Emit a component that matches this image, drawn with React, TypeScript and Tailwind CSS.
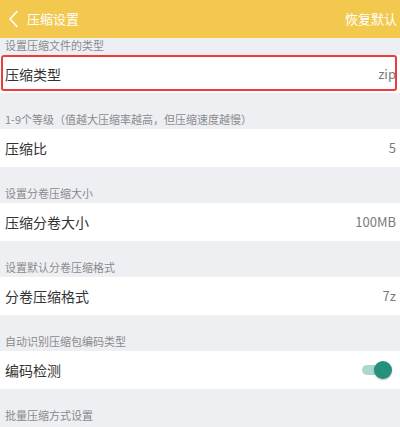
import React from "react";

const font = { fontFamily: '"Noto Sans CJK SC", "Noto Sans", sans-serif' };

function Label({ text, first }: { text: string; first?: boolean }) {
  return (
    <div
      className={
        "flex items-end pl-[5px] pb-[2px] text-[11px] leading-[15px] text-[#8a8a8e] " +
        (first ? "h-[17px]" : "h-[36px]")
      }
    >
      {text}
    </div>
  );
}

function Row({ title, value, boxed, children }: { title: string; value?: string; boxed?: boolean; children?: React.ReactNode }) {
  return (
    <div className="relative flex h-[38px] items-center justify-between bg-white pl-[5px] pr-[4px]">
      <span className="text-[14px] text-[#333333]">{title}</span>
      {value && <span className="text-[13px] text-[#7a7a7a]">{value}</span>}
      {children}
      {boxed && (
        <div className="pointer-events-none absolute left-[1px] right-[3px] top-0 bottom-[2px] rounded-[3px] border-[2px] border-[#ee3b3b]" />
      )}
    </div>
  );
}

export default function App() {
  return (
    <div className="h-[427px] w-[400px] overflow-hidden bg-[#eeeff3]" style={font}>
      <div className="flex h-[38px] items-center justify-between bg-[#f2c94e] pl-[8px] pr-[3px] text-white">
        <div className="flex items-center">
          <svg width="11" height="18" viewBox="0 0 11 18" fill="none">
            <path d="M9 1.5L2 9l7 7.5" stroke="white" strokeWidth="1.6" strokeLinecap="round" strokeLinejoin="round" />
          </svg>
          <span className="ml-[8px] text-[13px]">压缩设置</span>
        </div>
        <span className="text-[13px]">恢复默认</span>
      </div>
      <Label text="设置压缩文件的类型" first />
      <Row title="压缩类型" value="zip" boxed />
      <Label text="1-9个等级（值越大压缩率越高，但压缩速度越慢）" />
      <Row title="压缩比" value="5" />
      <Label text="设置分卷压缩大小" />
      <Row title="压缩分卷大小" value="100MB" />
      <Label text="设置默认分卷压缩格式" />
      <Row title="分卷压缩格式" value="7z" />
      <Label text="自动识别压缩包编码类型" />
      <Row title="编码检测">
        <div className="relative mr-[4px] h-[18px] w-[30px]">
          <div className="absolute left-0 right-[2px] top-[4px] h-[10px] rounded-full bg-[#a9d8cf]" />
          <div className="absolute right-0 top-0 h-[18px] w-[18px] rounded-full bg-[#24917c] shadow-[0_1px_2px_rgba(0,0,0,0.25)]" />
        </div>
      </Row>
      <Label text="批量压缩方式设置" />
    </div>
  );
}
